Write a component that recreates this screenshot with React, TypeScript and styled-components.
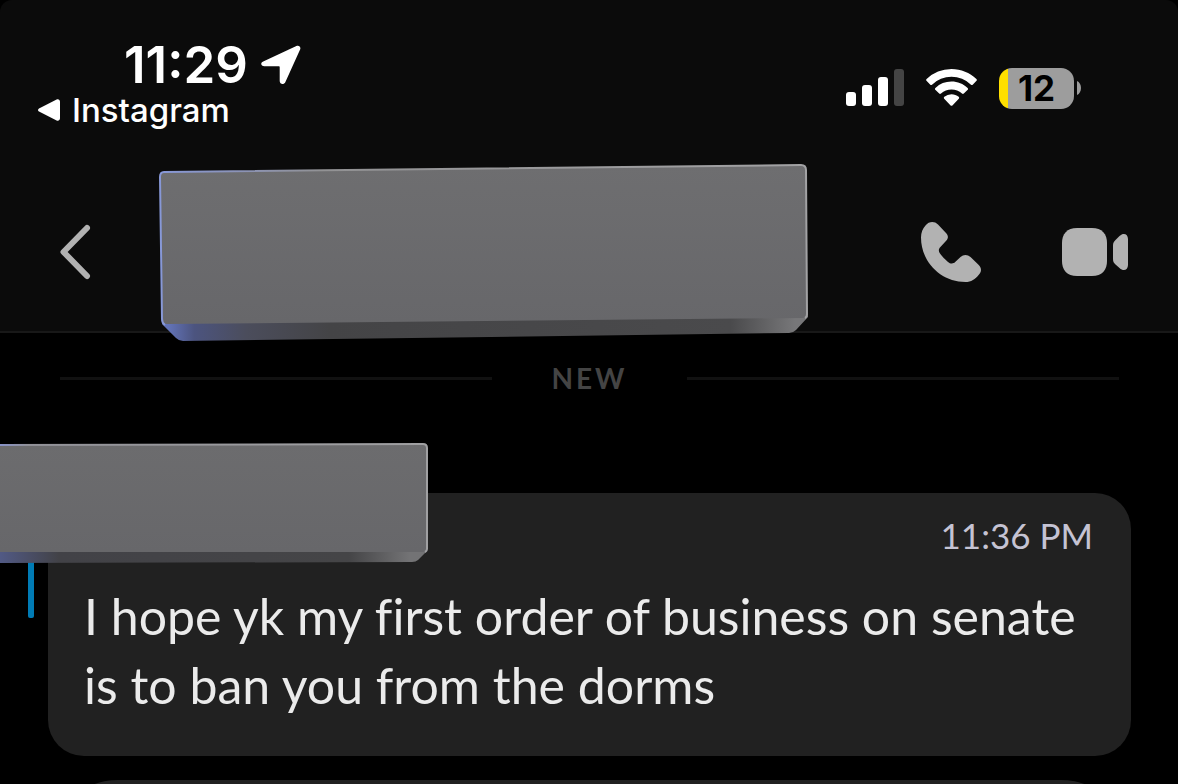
import React from "react";
import styled, { createGlobalStyle } from "styled-components";

const GlobalStyle = createGlobalStyle`
  *, *::before, *::after { box-sizing: border-box; }
  html, body, #root { min-height: 100vh; }
  body {
    margin: 0;
    background: #000;
    color: #fff;
    font-family: Inter, "Liberation Sans", sans-serif;
    overflow: hidden;
  }
  button { background: none; border: 0; padding: 0; cursor: pointer; }
  svg { display: block; flex: none; }
`;

const Page = styled.div`
  display: flex;
  flex-direction: column;
  height: 100vh;
  overflow: hidden;
`;

const Header = styled.header`
  flex: none;
  background: #0b0b0b;
  border-bottom: 2px solid #181818;
  border-radius: 12px 12px 0 0;
`;

const StatusBar = styled.div`
  display: flex;
  justify-content: space-between;
  padding: 40px 97px 36px 38px;
`;

const StatusLeft = styled.div`
  display: flex;
  flex-direction: column;
  align-items: flex-start;
`;

const Clock = styled.div`
  display: flex;
  align-items: center;
  gap: 13px;
  padding-left: 86px;
  font-size: 51px;
  font-weight: 600;
  line-height: 50px;
`;

const ReturnLink = styled.a`
  display: flex;
  align-items: center;
  gap: 12px;
  color: #fff;
  font-size: 33px;
  font-weight: 500;
  line-height: 40px;
  text-decoration: none;
`;

const StatusRight = styled.div`
  display: flex;
  align-items: center;
  gap: 22px;
  height: 96px;
`;

const Battery = styled.div`
  display: flex;
  align-items: center;
  gap: 3px;
`;

const BatteryBody = styled.div`
  width: 75px;
  height: 41px;
  border-radius: 13px;
  background: linear-gradient(to right, #ffdf00 9px, #9d9d9d 9px);
  color: #000;
  font-size: 35px;
  font-weight: 700;
  line-height: 41px;
  text-align: center;
`;

const NavBar = styled.nav`
  display: flex;
  align-items: center;
  height: 159px;
  padding: 0 50px 0 60px;
`;

const NameSlot = styled.div`
  flex: 1;
  height: 178px;
  margin: 0 112px 0 67px;
  position: relative;
  z-index: 1;
`;

const Actions = styled.div`
  display: flex;
  align-items: center;
  gap: 81px;
`;

const Divider = styled.div`
  display: flex;
  flex: none;
  align-items: center;
  height: 90px;
  padding: 0 59px 0 60px;
  color: #444;
  font-family: Lato, sans-serif;
  font-size: 28px;
  font-weight: 700;
  letter-spacing: 3px;
`;

const Rule = styled.span`
  flex: 1;
  height: 3px;
  background: #111;
`;

const DividerLabel = styled.span`
  width: 195px;
  text-align: center;
`;

const Thread = styled.main`
  display: flex;
  flex-direction: column;
  gap: 24px;
  padding: 70px 47px 0 48px;
`;

const Message = styled.article`
  position: relative;
  flex: none;
  padding: 20px 38px 36px 36px;
  border-radius: 36px;
  background: #212121;
  font-family: Lato, "Open Sans", sans-serif;
`;

const NextMessage = styled.article`
  flex: none;
  height: 160px;
  border-radius: 70px;
  background: #212121;
`;

const SenderBar = styled.span`
  position: absolute;
  left: -20px;
  top: 0;
  width: 6px;
  height: 125px;
  border-radius: 2px;
  background: #007bb5;
`;

const SenderCover = styled.div`
  position: absolute;
  left: -48px;
  top: -50px;
  width: 428px;
  height: 120px;
`;

const Time = styled.time`
  display: block;
  color: #c5c3d3;
  font-size: 35px;
  line-height: 44px;
  text-align: right;
`;

const Body = styled.p`
  margin: 25px 0 0;
  color: #ebebeb;
  font-size: 50px;
  font-variant-ligatures: none;
  line-height: 69px;
`;

const Line = styled.span`
  display: block;
  white-space: nowrap;
`;

const LocationArrow = () => (
  <svg width="40" height="40" viewBox="0 0 40 40" aria-hidden="true">
    <path
      fill="#fff"
      d="M2.2 16.6 35.4 1.1C38 0 40.2 2 39.1 4.6L24.3 37.2c-1.3 2.8-5.6 2.3-5.6-1.2V22.3c0-.6-.4-1-1-1H3.4C-.2 21.3-.9 18 2.2 16.6Z"
    />
  </svg>
);

const BackTriangle = () => (
  <svg width="22" height="22" viewBox="0 0 22 22" aria-hidden="true">
    <path fill="#fff" d="M1 9.400 18.600.6C20.300-.2 22 .8 22 2.700v16.600c0 1.900-1.700 2.900-3.400 2.100L1 12.600c-1.300-.7-1.300-2.500 0-3.200Z" />
  </svg>
);

const Signal = () => (
  <svg width="58" height="38" viewBox="0 0 58 38" role="img" aria-label="Signal">
    <rect x="0" y="23" width="10" height="14" rx="3" fill="#fff" />
    <rect x="16" y="16" width="10" height="21" rx="3" fill="#fff" />
    <rect x="32" y="8" width="10" height="29" rx="3" fill="#fff" />
    <rect x="48" y="0" width="10" height="37" rx="3" fill="#444" />
  </svg>
);

const Wifi = () => (
  <svg width="51" height="38" viewBox="0 0 51 38" role="img" aria-label="Wi-Fi">
    <g fill="#fff">
      <path d="M25.500 0C35 0 43.800 3.700 50.400 10c.6.500.6 1.300.1 1.800l-3.800 3.900c-.5.500-1.200.5-1.700 0a28 28 0 0 0-39 0c-.5.500-1.200.5-1.700 0L.5 11.800c-.5-.5-.5-1.300.1-1.800A36 36 0 0 1 25.500 0Z" />
      <path d="M25.500 12.600c6.100 0 11.800 2.300 16.100 6.300.6.500.6 1.300.1 1.800l-3.900 3.900c-.5.500-1.200.5-1.800 0a15.500 15.500 0 0 0-21 0c-.6.500-1.300.5-1.800 0l-3.900-3.900c-.5-.5-.5-1.300.1-1.800a23.600 23.600 0 0 1 16.100-6.300Z" />
      <path d="M25.500 25.200c2.700 0 5.200 1 7.200 2.600.6.500.6 1.300.1 1.900l-6.400 6.700c-.5.600-1.300.6-1.800 0l-6.400-6.700c-.5-.6-.5-1.400.1-1.900a11.500 11.500 0 0 1 7.200-2.600Z" />
    </g>
  </svg>
);

const BatteryCap = () => (
  <svg width="4" height="14" viewBox="0 0 4 14" aria-hidden="true">
    <path fill="#9d9d9d" d="M0 0c2.500 1.100 4 3.800 4 7s-1.500 5.900-4 7Z" />
  </svg>
);

const Chevron = () => (
  <svg width="32" height="56" viewBox="0 0 32 56" aria-hidden="true">
    <path d="M27 4 3.500 28 27 52" fill="none" stroke="#b2b2b2" strokeWidth="6" strokeLinecap="round" strokeLinejoin="round" />
  </svg>
);

const Phone = () => (
  <svg width="60" height="60" viewBox="0 0 60 60" aria-hidden="true">
    <path
      fill="#b2b2b2"
      d="M4.500 3.500C8-.8 13.500-1 17 2.500l8 8.500c2.500 2.600 2.400 5.400.4 7.600l-6 6.400c-2 2.200-2 4.200-.4 6.500 2.200 3 4.600 5.500 7.700 8.200 2.700 2.400 5.400 2.400 7.500.4l5.300-5.200c3-2.700 7-2.700 10 .1l8 7.700c3.300 3.300 3.300 7 .1 10.200C54.500 57 50 60 44.500 60 20 60 0 40 0 15.500 0 10.500 1.700 6.500 4.500 3.500Z"
    />
  </svg>
);

const Video = () => (
  <svg width="66" height="48" viewBox="0 0 66 48" aria-hidden="true">
    <g fill="#b2b2b2">
      <path d="M15 0h15c10 0 15 6 15 15v18c0 9-5 15-15 15H15C5 48 0 42 0 33V15C0 6 5 0 15 0Z" />
      <path d="M51 17.500c0-2.500.8-4 2.500-5.500l4-4c4-3.800 8.500-2 8.500 3v26c0 5-4.500 6.800-8.500 3l-4-3.500c-1.700-1.500-2.500-3-2.500-5.500Z" />
    </g>
  </svg>
);

const NameBlock = () => (
  <svg width="100%" height="178" viewBox="0 0 650 178" preserveAspectRatio="none" aria-hidden="true">
    <defs>
      <linearGradient id="nameFace" x1="0" y1="0" x2="0" y2="1">
        <stop offset="0" stopColor="#6e6e70" />
        <stop offset="1" stopColor="#67676a" />
      </linearGradient>
      <linearGradient id="nameBase" x1="0" y1="0" x2="1" y2="0">
        <stop offset="0.010" stopColor="#6273b8" />
        <stop offset="0.050" stopColor="#4c547f" />
        <stop offset="0.130" stopColor="#4b4d5c" />
        <stop offset="0.260" stopColor="#444446" />
        <stop offset="0.880" stopColor="#4a4a4c" />
        <stop offset="0.980" stopColor="#777779" />
      </linearGradient>
      <linearGradient id="nameEdge" x1="0" y1="0" x2="1" y2="0">
        <stop offset="0" stopColor="#8798d8" />
        <stop offset="0.120" stopColor="#8b93b8" />
        <stop offset="0.250" stopColor="#929294" />
        <stop offset="1" stopColor="#a2a2a4" />
      </linearGradient>
    </defs>
    <path fill="url(#nameBase)" d="M3 157 649 151v3l-12 13q-3 3-7 3L24 178q-4 0-7-3L3 161Z" />
    <path fill="url(#nameFace)" d="M5 9 642 2q5 0 5 5l1 144q0 4-5 4L8 161q-5 0-5-5L1 14q0-5 4-5Z" />
    <path fill="none" stroke="url(#nameEdge)" strokeWidth="2" d="M6 162q-3-2-3-6L1 14q0-5 4-5L642 2q5 0 5 5l1 144q0 3-2 4" />
  </svg>
);

const SenderBlock = () => (
  <svg width="428" height="120" viewBox="0 0 428 120" aria-hidden="true">
    <defs>
      <linearGradient id="senderFace" x1="0" y1="0" x2="0" y2="1">
        <stop offset="0" stopColor="#6c6c6e" />
        <stop offset="1" stopColor="#67676a" />
      </linearGradient>
      <linearGradient id="senderBase" x1="0" y1="0" x2="1" y2="0">
        <stop offset="0" stopColor="#535c8b" />
        <stop offset="0.150" stopColor="#424247" />
        <stop offset="0.820" stopColor="#454547" />
        <stop offset="0.960" stopColor="#737375" />
      </linearGradient>
      <linearGradient id="senderEdge" x1="0" y1="0" x2="1" y2="0">
        <stop offset="0" stopColor="#8492d2" />
        <stop offset="0.080" stopColor="#929298" />
        <stop offset="1" stopColor="#a0a0a2" />
      </linearGradient>
    </defs>
    <path fill="url(#senderBase)" d="M-6 108H427l-9 9q-2 2-6 2L-6 120Z" />
    <path fill="url(#senderFace)" d="M-6 2 423 1q4 0 4 4v101q0 3-4 3L-6 109Z" />
    <path fill="none" stroke="url(#senderEdge)" strokeWidth="2" d="M-6 2 423 1q4 0 4 4v101q0 2-2 3" />
  </svg>
);

export default function App() {
  return (
    <Page>
      <GlobalStyle />
      <Header>
        <StatusBar>
          <StatusLeft>
            <Clock>
              <span>11:29</span>
              <LocationArrow />
            </Clock>
            <ReturnLink href="#instagram">
              <BackTriangle />
              Instagram
            </ReturnLink>
          </StatusLeft>
          <StatusRight>
            <Signal />
            <Wifi />
            <Battery>
              <BatteryBody>12</BatteryBody>
              <BatteryCap />
            </Battery>
          </StatusRight>
        </StatusBar>
        <NavBar>
          <button aria-label="Back">
            <Chevron />
          </button>
          <NameSlot>
            <NameBlock />
          </NameSlot>
          <Actions>
            <button aria-label="Voice call">
              <Phone />
            </button>
            <button aria-label="Video call">
              <Video />
            </button>
          </Actions>
        </NavBar>
      </Header>
      <Divider>
        <Rule />
        <DividerLabel>NEW</DividerLabel>
        <Rule />
      </Divider>
      <Thread>
        <Message>
          <SenderBar />
          <Time>11:36 PM</Time>
          <Body>
            <Line>I hope yk my first order of business on senate</Line>
            <Line>is to ban you from the dorms</Line>
          </Body>
          <SenderCover>
            <SenderBlock />
          </SenderCover>
        </Message>
        <NextMessage />
      </Thread>
    </Page>
  );
}
